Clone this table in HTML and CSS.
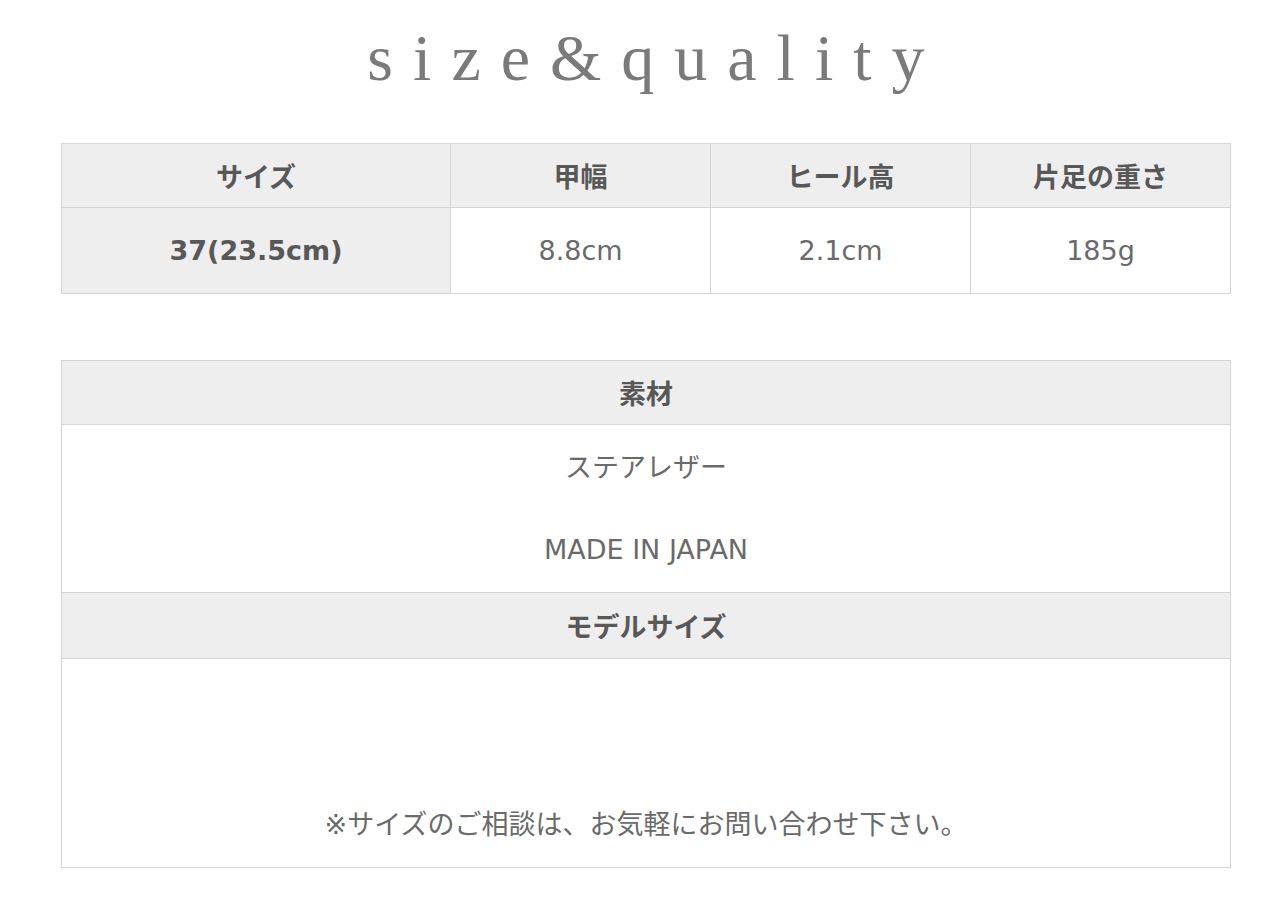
FILE: index.html
```html
<!DOCTYPE html>
<html lang="ja">
<head>
<meta charset="utf-8">
<link rel="stylesheet" href="styles.css">
</head>
<body>
<div class="page">
  <h1 class="title">size&amp;quality</h1>
  <table class="spec">
    <colgroup>
      <col class="c1"><col class="c2"><col class="c2"><col class="c2">
    </colgroup>
    <tr class="head">
      <th>サイズ</th><th>甲幅</th><th>ヒール高</th><th>片足の重さ</th>
    </tr>
    <tr class="data">
      <th>37(23.5cm)</th><td>8.8cm</td><td>2.1cm</td><td>185g</td>
    </tr>
  </table>
  <table class="info">
    <tr class="head"><th>素材</th></tr>
    <tr><td class="material"><p>ステアレザー</p><p>MADE IN JAPAN</p></td></tr>
    <tr class="head model-head"><th>モデルサイズ</th></tr>
    <tr><td class="model"><p>※サイズのご相談は、お気軽にお問い合わせ下さい。</p></td></tr>
  </table>
</div>
</body>
</html>
```

FILE: styles.css
```css
html, body {
  margin: 0;
  padding: 0;
  background: #ffffff;
}
.page {
  width: 1170px;
  margin-left: 61px;
  padding-top: 2px;
  font-family: "DejaVu Sans", "Noto Sans CJK JP", sans-serif;
  color: #666666;
}
.title {
  margin: 0;
  height: 141px;
  box-sizing: border-box;
  padding-top: 16px;
  text-align: center;
  font-family: "Liberation Serif", serif;
  font-weight: normal;
  font-size: 66px;
  line-height: 80px;
  letter-spacing: 20px;
  text-indent: 20px;
  color: #7a7a7a;
}
table {
  width: 1170px;
  border-collapse: collapse;
  table-layout: fixed;
}
th, td {
  border: 1px solid #d4d4d4;
  text-align: center;
  font-size: 27px;
  padding: 0;
}
th {
  background: #eeeeee;
  font-weight: bold;
  color: #585858;
}
td {
  color: #6a6a6a;
  font-weight: normal;
}
.c1 { width: 389px; }
.c2 { width: 260px; }
.spec .head th { height: 63px; }
.spec .data th, .spec .data td { height: 85px; }
.info { margin-top: 66px; }
.info .head th { height: 63px; }
.info .model-head th { height: 65px; }
.info p { margin: 0; line-height: 36px; }
.material { padding: 25px 0 24px; }
.material p + p { margin-top: 46px; }
.model { padding: 148px 0 24px; }
```
